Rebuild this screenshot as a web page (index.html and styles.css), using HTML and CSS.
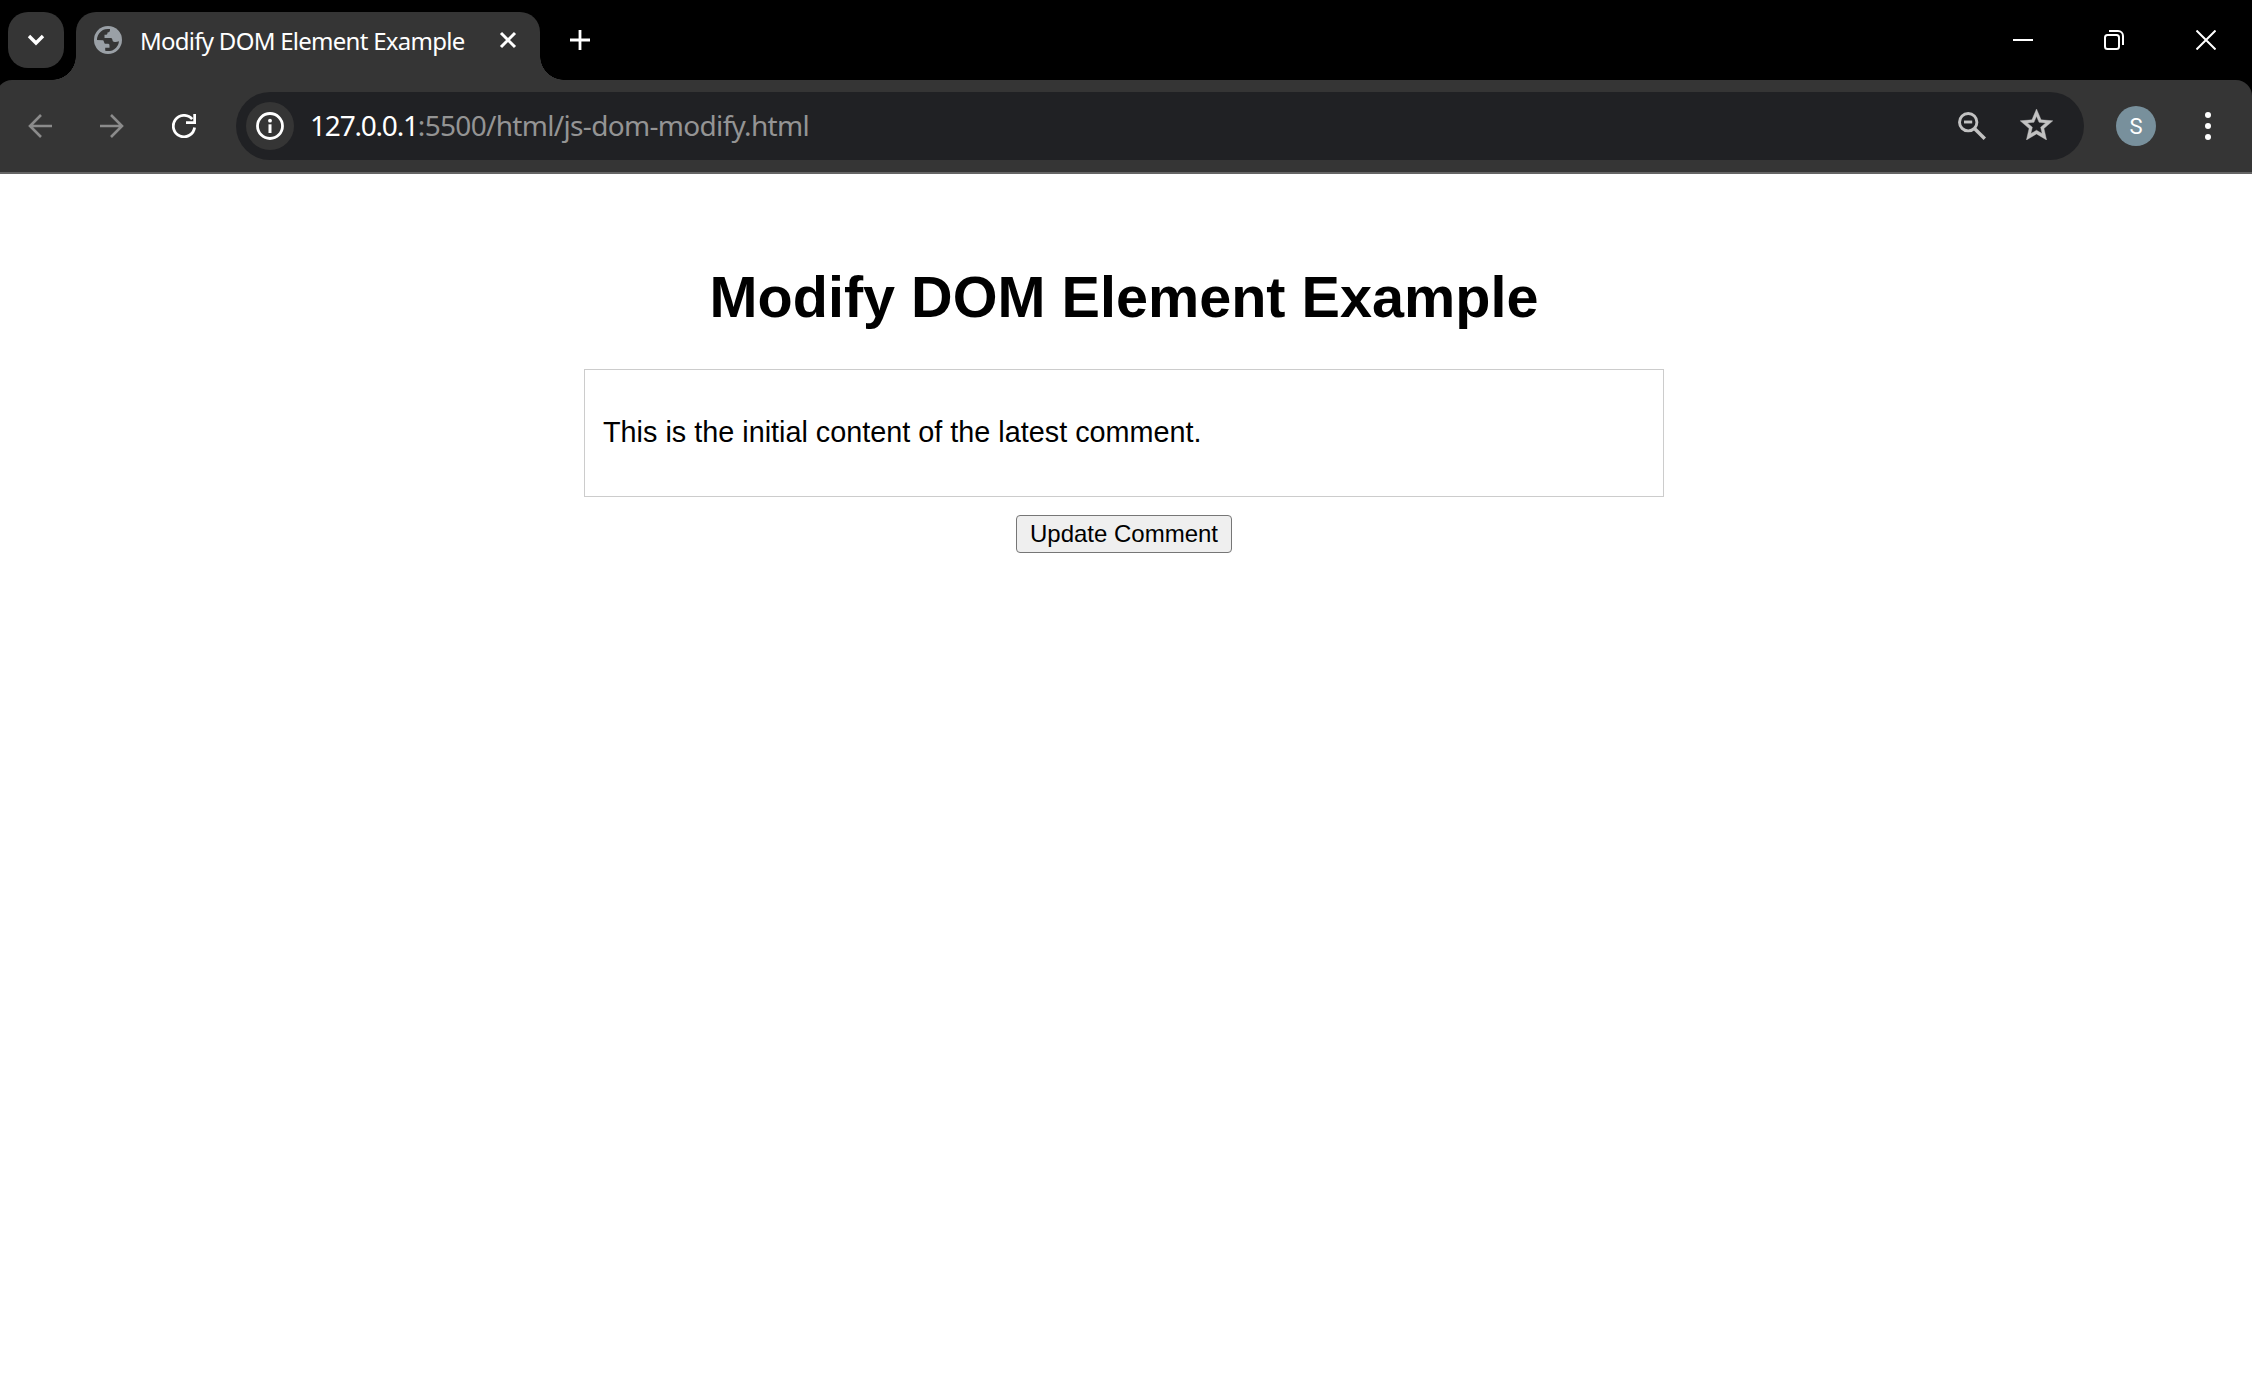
FILE: index.html
```html
<!DOCTYPE html>
<html lang="en">
<head>
<meta charset="utf-8">
<title>Modify DOM Element Example</title>
<link rel="stylesheet" href="styles.css">
</head>
<body>
<header class="browser">
  <div class="tabstrip">
    <div class="tab-search">
      <svg width="18" height="12" viewBox="0 0 18 12"><path d="M2 2l7 7 7-7" fill="none" stroke="#fff" stroke-width="3.4"/></svg>
    </div>
    <div class="tab">
      <svg class="globe" width="28" height="28" viewBox="0 0 28 28">
        <circle cx="14" cy="14" r="14" fill="#9aa0a6"/>
        <path d="M16 3.100A11 11 0 0 0 3 14l6 .2c1 0 .8 3.400 2.600 3.600 2.200.2 3.900-.3 3.900 1.700v2.200h-4.300v3A11 11 0 0 0 25 15.200c-2 .8-3.500 1-5.200.6-1.800-.5-.8-3.300-2.800-3.900h-6.500V8.800c2.800.1 3-.8 3-2.300 2.500 0 2.500-1.500 2.500-3.400z" fill="#353535"/>
      </svg>
      <span class="tab-title">Modify DOM Element Example</span>
      <svg class="tab-close" width="18" height="18" viewBox="0 0 18 18"><path d="M2 2l14 14M16 2L2 16" stroke="#fff" stroke-width="3"/></svg>
    </div>
    <svg class="new-tab" width="20" height="20" viewBox="0 0 20 20"><path d="M10 0v20M0 10h20" stroke="#fff" stroke-width="2.800"/></svg>
    <div class="window-controls">
      <svg width="20" height="20" viewBox="0 0 20 20"><path d="M0 10h20" stroke="#fff" stroke-width="2"/></svg>
      <svg width="20" height="20" viewBox="0 0 20 20" fill="none" stroke="#fff" stroke-width="2"><rect x="1" y="5" width="14" height="14" rx="2.500"/><path d="M5 1h9a5 5 0 0 1 5 5v9"/></svg>
      <svg class="window-close" width="20" height="20" viewBox="0 0 20 20"><path d="M.5.5l19 19M19.500.5l-19 19" stroke="#fff" stroke-width="2"/></svg>
    </div>
  </div>
  <div class="toolbar">
    <nav class="nav">
      <svg width="24" height="24" viewBox="0 0 24 24" fill="none" stroke="#8b8b8b" stroke-width="2.600"><path d="M24 12H2M13 1L2 12l11 11"/></svg>
      <svg width="24" height="24" viewBox="0 0 24 24" fill="none" stroke="#8b8b8b" stroke-width="2.600"><path d="M0 12h22M11 1l11 11-11 11"/></svg>
      <svg width="24" height="24" viewBox="0 0 24 24"><path d="M22.600 13.500A10.700 10.700 0 1 1 20.200 5.200" fill="none" stroke="#fff" stroke-width="2.800"/><path d="M24 0v10H14V7.300h7.300V0z" fill="#fff"/></svg>
    </nav>
    <div class="omnibox">
      <span class="site-info"><svg width="28" height="28" viewBox="0 0 28 28"><circle cx="14" cy="14" r="12.500" fill="none" stroke="#fff" stroke-width="2.800"/><rect x="12.500" y="12.300" width="3" height="8.700" fill="#fff"/><circle cx="14" cy="8.700" r="1.900" fill="#fff"/></svg></span>
      <span class="url"><span class="host">127.0.0.1</span><span class="path">:5500/html/js-dom-modify.html</span></span>
      <svg class="zoom-icon" width="28" height="28" viewBox="0 0 28 28" fill="none" stroke="#c2c2c2" stroke-width="2.900"><circle cx="10.200" cy="10.200" r="8.700"/><path d="M16.200 16.200L26.800 26.800" stroke-width="3.400"/><path d="M6 10h8.200"/></svg>
      <svg class="star" width="33" height="31" viewBox="2 2 20 19"><path d="M22 9.240l-7.190-.62L12 2 9.190 8.630 2 9.240l5.460 4.730L5.820 21 12 17.270 18.180 21l-1.630-7.030L22 9.240zM12 15l-3.450 2.080.92-3.930-3.050-2.640 4.020-.35L12 6.450l1.570 3.710 4.020.35-3.050 2.640.92 3.930L12 15z" fill="#c2c2c2" stroke="#c2c2c2" stroke-width=".25"/></svg>
    </div>
    <span class="avatar">S</span>
    <svg class="menu" width="6" height="28" viewBox="0 0 6 28" fill="#fff"><circle cx="3" cy="3" r="3"/><circle cx="3" cy="14" r="3"/><circle cx="3" cy="25" r="3"/></svg>
  </div>
</header>
<main class="page">
  <h1>Modify DOM Element Example</h1>
  <div class="comment"><p>This is the initial content of the latest comment.</p></div>
  <button class="update" type="button">Update Comment</button>
</main>
</body>
</html>
```
FILE: styles.css
```css
* { box-sizing: border-box; }
html, body { margin: 0; height: 100%; overflow: hidden; background: #fff; }
svg { display: block; flex: none; }
.browser { height: 174px; background: #000; font-family: "Noto Sans", sans-serif; }
.tabstrip { display: flex; height: 80px; padding: 12px 36px 0 8px; }
.tab-search { display: flex; align-items: center; justify-content: center; width: 56px; height: 56px; border-radius: 20px; background: #353535; }
.tab { position: relative; display: flex; align-items: center; width: 464px; height: 68px; margin-left: 12px; padding: 0 23px 12px 18px; border-radius: 20px 20px 0 0; background: #353535; }
.tab::before, .tab::after { content: ""; position: absolute; bottom: 0; width: 24px; height: 24px; }
.tab::before { left: -24px; background: radial-gradient(circle at 0 0, transparent 23.500px, #353535 24px); }
.tab::after { right: -24px; background: radial-gradient(circle at 100% 0, transparent 23.500px, #353535 24px); }
.tab-title { flex: 1; margin-left: 18px; padding-top: 2px; font-size: 24px; line-height: 32px; letter-spacing: -0.73px; color: #fff; white-space: nowrap; }
.new-tab { margin: 18px 0 0 30px; }
.window-controls { display: flex; gap: 71px; margin: 18px 0 0 auto; }
.window-close { margin-left: 1px; }
.toolbar { display: flex; align-items: center; height: 94px; margin-left: -4px; padding: 0 41px 0 32px; border-bottom: 2px solid #656565; border-radius: 16px 16px 0 0; background: #353535; }
.nav { display: flex; gap: 48px; }
.omnibox { display: flex; align-items: center; width: 1848px; height: 68px; margin-left: 40px; padding: 0 31px 0 10px; border-radius: 34px; background: #202124; }
.site-info { display: flex; align-items: center; justify-content: center; width: 48px; height: 48px; border-radius: 50%; background: #353535; }
.url { flex: 1; margin-left: 16px; padding-bottom: 2px; font-size: 28px; line-height: 40px; color: #949494; white-space: nowrap; }
.host { color: #fff; letter-spacing: -1.200px; }
.path { letter-spacing: -0.680px; }
.star { margin: -3px 0 0 34px; }
.avatar { width: 40px; height: 40px; margin-left: 32px; border-radius: 50%; background: #78909c; color: #fff; font: 22px/41px Roboto, sans-serif; text-align: center; }
.menu { margin-left: auto; }
.page { display: flex; flex-direction: column; align-items: center; width: 2248px; padding-top: 90px; font-family: "Liberation Sans", Arial, sans-serif; color: #000; }
h1 { margin: 0 0 38px; font-size: 57.600px; line-height: 67px; }
.comment { width: 1080px; height: 128px; padding: 46px 18px 0; border: 1px solid #ccc; }
.comment p { margin: 0; font-size: 28.800px; line-height: 33px; }
.update { width: 216px; height: 38px; margin-top: 18px; padding: 0; border: 1px solid #767676; border-radius: 4px; background: #efefef; color: #000; font: 24px/34px "Liberation Sans", Arial, sans-serif; white-space: nowrap; }
```
